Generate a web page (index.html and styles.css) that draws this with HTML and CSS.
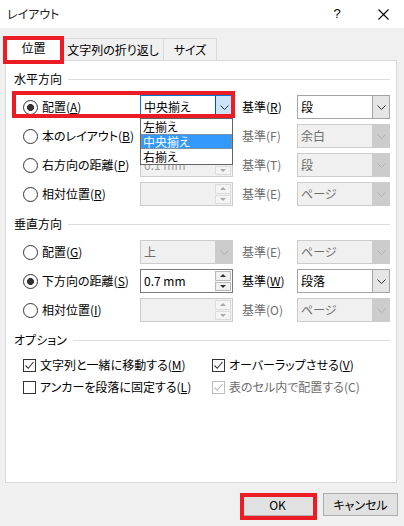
FILE: index.html
```html
<!DOCTYPE html>
<html lang="ja">
<head>
<meta charset="utf-8">
<title>レイアウト</title>
<link rel="stylesheet" href="styles.css">
</head>
<body>
<div class="dialog">
  <header class="titlebar">
    <span class="title">レイアウト</span>
    <span class="help">?</span>
    <span class="close">
      <svg width="11" height="11" viewBox="0 0 11 11"><path d="M0.5 0.5L10.5 10.5M10.5 0.5L0.5 10.5" stroke="#000" stroke-width="1.1" fill="none"/></svg>
    </span>
  </header>

  <div class="content">
    <div class="tabs">
      <div class="tab active">位置<span class="mark mark-tab"></span></div>
      <div class="tab tab-wrap">文字列の折り返し</div>
      <div class="tab tab-size">サイズ</div>
    </div>

    <div class="panel">
      <section class="group">
        <div class="group-head"><span>水平方向</span><i class="rule"></i></div>
        <div class="rows">
          <div class="row">
            <span class="radio on"><span>配置(<u>A</u>)</span></span>
            <div class="combo focus">
              <span class="value">中央揃え</span>
              <span class="btn"><svg width="9" height="5" viewBox="0 0 9 5"><path d="M0.5 0.5L4.5 4.5L8.5 0.5" stroke="#333" fill="none"/></svg></span>
              <ul class="list">
                <li>左揃え</li>
                <li class="sel">中央揃え</li>
                <li>右揃え</li>
              </ul>
            </div>
            <span class="ref">基準(<u>R</u>)</span>
            <div class="combo">
              <span class="value">段</span>
              <span class="btn"><svg width="9" height="5" viewBox="0 0 9 5"><path d="M0.5 0.5L4.5 4.5L8.5 0.5" stroke="#333" fill="none"/></svg></span>
            </div>
            <span class="mark mark-row"></span>
          </div>

          <div class="row">
            <span class="radio"><span>本のレイアウト(<u>B</u>)</span></span>
            <div class="spin disabled"><span class="value"></span><span class="arrows"><span class="up"></span><span class="down"></span></span></div>
            <span class="ref off">基準(F)</span>
            <div class="combo disabled">
              <span class="value">余白</span>
              <span class="btn"><svg width="9" height="5" viewBox="0 0 9 5"><path d="M0.5 0.5L4.5 4.5L8.5 0.5" stroke="#b0b0b0" fill="none"/></svg></span>
            </div>
          </div>

          <div class="row">
            <span class="radio"><span>右方向の距離(<u>P</u>)</span></span>
            <div class="spin disabled"><span class="value">0.1 mm</span><span class="arrows"><span class="up"></span><span class="down"></span></span></div>
            <span class="ref off">基準(T)</span>
            <div class="combo disabled">
              <span class="value">段</span>
              <span class="btn"><svg width="9" height="5" viewBox="0 0 9 5"><path d="M0.5 0.5L4.5 4.5L8.5 0.5" stroke="#b0b0b0" fill="none"/></svg></span>
            </div>
          </div>

          <div class="row">
            <span class="radio"><span>相対位置(<u>R</u>)</span></span>
            <div class="spin disabled"><span class="value"></span><span class="arrows"><span class="up"></span><span class="down"></span></span></div>
            <span class="ref off">基準(E)</span>
            <div class="combo disabled">
              <span class="value">ページ</span>
              <span class="btn"><svg width="9" height="5" viewBox="0 0 9 5"><path d="M0.5 0.5L4.5 4.5L8.5 0.5" stroke="#b0b0b0" fill="none"/></svg></span>
            </div>
          </div>
        </div>
      </section>

      <section class="group">
        <div class="group-head"><span>垂直方向</span><i class="rule"></i></div>
        <div class="rows">
          <div class="row">
            <span class="radio"><span>配置(<u>G</u>)</span></span>
            <div class="combo disabled">
              <span class="value">上</span>
              <span class="btn"><svg width="9" height="5" viewBox="0 0 9 5"><path d="M0.5 0.5L4.5 4.5L8.5 0.5" stroke="#b0b0b0" fill="none"/></svg></span>
            </div>
            <span class="ref off">基準(E)</span>
            <div class="combo disabled">
              <span class="value">ページ</span>
              <span class="btn"><svg width="9" height="5" viewBox="0 0 9 5"><path d="M0.5 0.5L4.5 4.5L8.5 0.5" stroke="#b0b0b0" fill="none"/></svg></span>
            </div>
          </div>

          <div class="row">
            <span class="radio on"><span>下方向の距離(<u>S</u>)</span></span>
            <div class="spin"><span class="value">0.7 mm</span><span class="arrows"><span class="up"></span><span class="down"></span></span></div>
            <span class="ref">基準(<u>W</u>)</span>
            <div class="combo">
              <span class="value">段落</span>
              <span class="btn"><svg width="9" height="5" viewBox="0 0 9 5"><path d="M0.5 0.5L4.5 4.5L8.5 0.5" stroke="#333" fill="none"/></svg></span>
            </div>
          </div>

          <div class="row">
            <span class="radio"><span>相対位置(<u>I</u>)</span></span>
            <div class="spin disabled"><span class="value"></span><span class="arrows"><span class="up"></span><span class="down"></span></span></div>
            <span class="ref off">基準(O)</span>
            <div class="combo disabled">
              <span class="value">ページ</span>
              <span class="btn"><svg width="9" height="5" viewBox="0 0 9 5"><path d="M0.5 0.5L4.5 4.5L8.5 0.5" stroke="#b0b0b0" fill="none"/></svg></span>
            </div>
          </div>
        </div>
      </section>

      <section class="group">
        <div class="group-head"><span>オプション</span><i class="rule"></i></div>
        <div class="checks">
          <span class="check"><span class="box"><svg width="11" height="11" viewBox="0 0 11 11"><path d="M1.5 5.5L4.2 8.3L9.5 2" stroke="#333" stroke-width="1.1" fill="none"/></svg></span><span>文字列と一緒に移動する(<u>M</u>)</span></span>
          <span class="check"><span class="box"><svg width="11" height="11" viewBox="0 0 11 11"><path d="M1.5 5.5L4.2 8.3L9.5 2" stroke="#333" stroke-width="1.1" fill="none"/></svg></span><span>オーバーラップさせる(<u>V</u>)</span></span>
          <span class="check"><span class="box"></span><span>アンカーを段落に固定する(<u>L</u>)</span></span>
          <span class="check off"><span class="box"><svg width="11" height="11" viewBox="0 0 11 11"><path d="M1.5 5.5L4.2 8.3L9.5 2" stroke="#b5b5b5" stroke-width="1.1" fill="none"/></svg></span><span>表のセル内で配置する(C)</span></span>
        </div>
      </section>
    </div>

    <div class="buttons">
      <button class="button">OK<span class="mark mark-ok"></span></button>
      <button class="button">キャンセル</button>
    </div>
  </div>
</div>
</body>
</html>
```

FILE: styles.css
```css
* {
  box-sizing: border-box;
}

html,
body {
  margin: 0;
  padding: 0;
}

body {
  width: 404px;
  height: 526px;
  overflow: hidden;
  background: #f0f0f0;
  color: #000;
  font-family: "Noto Sans CJK JP", "Noto Sans", sans-serif;
  font-size: 12px;
  font-feature-settings: "palt";
}

u {
  text-underline-offset: 1px;
}

/* window caption */
.titlebar {
  height: 28px;
  background: #fff;
  display: flex;
  align-items: center;
  padding: 0 11px 0 7px;
}

.title {
  flex: 1;
  line-height: 16px;
  color: #202020;
}

.help {
  width: 20px;
  text-align: center;
  font-size: 13px;
  line-height: 16px;
  font-family: "Liberation Sans", sans-serif;
  margin-right: 26px;
}

.close {
  width: 20px;
  display: flex;
  justify-content: center;
}

.content {
  padding: 0 7px 0 5px;
}

/* tab strip */
.tabs {
  height: 32px;
  display: flex;
  align-items: flex-end;
}

.tab {
  height: 22px;
  border: 1px solid #d9d9d9;
  border-bottom: none;
  background: #f0f0f0;
  display: flex;
  align-items: center;
  justify-content: center;
  line-height: 16px;
}

.tab.active {
  width: 57px;
  height: 25px;
  margin-bottom: -1px;
  background: #fff;
  position: relative;
  z-index: 1;
  padding-bottom: 2px;
}

.tab-wrap {
  width: 102px;
}

.tab-size {
  width: 53px;
  border-left: none;
}

/* red highlight frames */
.mark {
  position: absolute;
  border: 4px solid #ec1c24;
  pointer-events: none;
  z-index: 2;
}

.mark-tab {
  left: -3px;
  top: -1px;
  width: 61px;
  height: 28px;
}

.mark-row {
  left: -11px;
  top: -4px;
  width: 223px;
  height: 27px;
}

.mark-ok {
  left: -1px;
  top: -1px;
  width: 77px;
  height: 27px;
}

/* tab page */
.panel {
  height: 423px;
  background: #fff;
  border: 1px solid #d9d9d9;
  padding: 10px 6px 0 8px;
}

.group + .group {
  margin-top: 10px;
}

.group-head {
  display: flex;
  align-items: center;
  height: 16px;
  line-height: 16px;
}

.rule {
  flex: 1;
  height: 1px;
  background: #dcdcdc;
  margin-left: 6px;
}

.rows {
  margin: 8px 0 0 9px;
  display: flex;
  flex-direction: column;
  gap: 5px;
}

.row {
  position: relative;
  display: grid;
  grid-template-columns: 117px 93px 64px 93px;
  height: 24px;
}

.radio {
  display: flex;
  align-items: center;
  gap: 4px;
  line-height: 16px;
  white-space: nowrap;
}

.radio::before {
  content: "";
  width: 13px;
  height: 13px;
  flex: none;
  border: 1px solid #333;
  border-radius: 50%;
  background: #fff;
}

.radio.on::before {
  background: radial-gradient(circle, #333 0 3.2px, #fff 3.8px);
}

.ref {
  padding-left: 9px;
  line-height: 24px;
}

.ref.off {
  color: #6d6d6d;
}

/* drop-down boxes */
.combo {
  position: relative;
  display: flex;
  height: 24px;
  border: 1px solid #a5a5a5;
  background: #fff;
}

.combo .value {
  flex: 1;
  padding-left: 3px;
  line-height: 22px;
  white-space: nowrap;
}

.combo .btn {
  width: 17px;
  border-left: 1px solid #a5a5a5;
  background: #e5e5e5;
  display: flex;
  align-items: center;
  justify-content: center;
}

.combo.focus {
  border-color: #0078d7;
}

.combo.focus .btn {
  background: #cce4f7;
  border-left-color: #005499;
}

.combo.disabled {
  border-color: #cccccc;
  background: #f0f0f0;
  color: #6d6d6d;
}

.combo.disabled .btn {
  background: #cccccc;
  border-left-color: #cccccc;
}

.list {
  position: absolute;
  left: -1px;
  top: 22px;
  width: 93px;
  margin: 0;
  padding: 0;
  list-style: none;
  background: #fff;
  border: 1px solid #646464;
  z-index: 3;
}

.list li {
  height: 15px;
  line-height: 15px;
  padding-left: 2px;
}

.list li.sel {
  background: #3399ff;
  color: #fff;
  outline: 1px dotted #c08a5a;
  outline-offset: -1px;
}

/* number fields */
.spin {
  display: flex;
  height: 24px;
  border: 1px solid #7a7a7a;
  background: #fff;
  padding: 1px;
}

.spin .value {
  flex: 1;
  padding-left: 2px;
  line-height: 20px;
}

.spin .arrows {
  width: 16px;
  display: flex;
  flex-direction: column;
  gap: 1px;
}

.spin .arrows span {
  flex: 1;
  background: #f0f0f0;
  border: 1px solid #b8b8b8;
  display: flex;
  align-items: center;
  justify-content: center;
}

.spin .up::after,
.spin .down::after {
  content: "";
  border-left: 3px solid transparent;
  border-right: 3px solid transparent;
}

.spin .up::after {
  border-bottom: 3px solid #333;
}

.spin .down::after {
  border-top: 3px solid #333;
}

.spin.disabled {
  border-color: #cccccc;
  background: #f0f0f0;
  color: #a0a0a0;
}

.spin.disabled .arrows span {
  border-color: #dcdcdc;
  background: #f4f4f4;
}

.spin.disabled .up::after {
  border-bottom-color: #a8a8a8;
}

.spin.disabled .down::after {
  border-top-color: #a8a8a8;
}

/* option check boxes */
.checks {
  margin: 8px 0 0 9px;
  display: grid;
  grid-template-columns: 189px auto;
  grid-auto-rows: 18px;
  row-gap: 4px;
}

.check {
  display: flex;
  align-items: center;
  gap: 4px;
  line-height: 16px;
  white-space: nowrap;
}

.check .box {
  width: 13px;
  height: 13px;
  flex: none;
  border: 1px solid #333;
  background: #fff;
  display: flex;
}

.check.off {
  color: #6d6d6d;
}

.check.off .box {
  border-color: #bcbcbc;
}

/* dialog buttons */
.buttons {
  display: flex;
  justify-content: flex-end;
  gap: 8px;
  margin: 10px -1px 0 0;
}

.button {
  position: relative;
  width: 75px;
  height: 23px;
  padding: 0;
  background: #e1e1e1;
  border: 1px solid #adadad;
  font: inherit;
  line-height: 16px;
  color: #000;
}
```
